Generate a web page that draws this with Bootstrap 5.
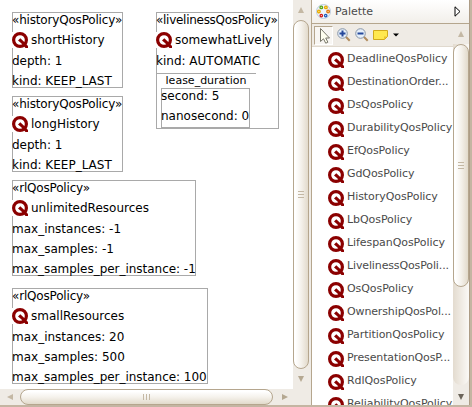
<!DOCTYPE html>
<html lang="en">
<head>
<meta charset="utf-8">
<title>QoS policy editor</title>
<link href="https://cdn.jsdelivr.net/npm/bootstrap@5.3.0/dist/css/bootstrap.min.css" rel="stylesheet">
<style>
body{width:472px;height:407px;overflow:hidden;background:#fff;color:#000;font-family:"DejaVu Sans",sans-serif;font-size:12px;line-height:20px}
.editor{height:407px;border-bottom:2px solid #c4b5a2}
.left-pane{width:309px}
.canvas{width:293px;height:389px;padding:12px 0 0 12px}
.diagram{display:grid;grid-template-columns:144px auto;grid-template-rows:76px 76px 96px 96px;row-gap:8px;justify-content:start}
.node{border:1px solid #a9a9a9;white-space:nowrap;justify-self:start}
.node>div,.inner-node>div{height:20px;text-indent:-1px}
.node>div:first-child{margin-top:-3px;letter-spacing:-.18px}
.node.tall>div:first-child{letter-spacing:-.28px}
.node .node-name{height:21px;margin-left:-1px;text-indent:0}
.node .node-name svg{background:#fff;flex:none;margin-top:2px}
.node-name span{margin-left:3px}
.w-a{width:111px}.w-b{width:184px}.w-c{width:196px}.w-d{width:123px}
.wide{grid-column:1/3}
.tall{grid-column:2;grid-row:1/3;height:117px}
.last-node{margin-top:4px;height:96px}
.long-line{letter-spacing:-.03px}
.node>.lease-title{width:99px;height:15px;margin-top:2px;border-top:1px solid #a9a9a9;font-size:11px;line-height:13px;text-align:center}
.node>.inner-node{width:89px;height:40px;margin-left:4px;border:1px solid #a9a9a9}
.inner-node>div:first-child{margin-top:-3px}
.sb{background:#efebe5}
.vbar{width:16px}
.hbar{height:16px}
.cap{flex:none;width:16px;height:16px;display:flex;align-items:center;justify-content:center}
.track-v{background:linear-gradient(90deg,#e3dbcf,#fbf9f6);border-radius:0 0 8px 8px}
.thumb{border:1px solid #b5a68e;border-radius:8px;display:flex;align-items:center;justify-content:center}
.thumb-v{background:linear-gradient(90deg,#fff 10%,#f5f2ec 50%,#e2dacb)}
.thumb-h{background:linear-gradient(#fff 10%,#f5f2ec 50%,#e2dacb)}
.sash{width:3px;background:#efebe5;border-right:1px solid #b5a68e}
.palette{width:157px;color:#4a4a4a;font-size:11px}
.pal-head{height:24px;background:linear-gradient(#fff,#f2efea);border-bottom:1px solid #b5a68e;padding:0 8px 0 4px}
.pal-tools{height:23px;background:#efebe5;border-bottom:1px solid #e0d9ce}
.pick{width:19px;height:19px;margin:1px 0 0 2px;background:#f8f6f3;border:1px solid #fff;border-top-color:#b5a68e;border-left-color:#b5a68e}
.pal-main{width:141px}
.pal-list{padding-top:1px;flex:1 1 0;overflow:hidden}
.pal-item{height:23px;line-height:23px;padding-left:16px;white-space:nowrap;letter-spacing:-.07px}
.pal-item svg{flex:none;margin-top:1px}
.pal-item span{margin-left:3px;margin-top:-3px}
.pal-item .clipped{letter-spacing:-.13px}
.edge{width:3px;background:#c4b5a2;border-left:1px solid #ad9c86}
</style>
<script src="https://cdn.jsdelivr.net/npm/bootstrap@5.3.0/dist/js/bootstrap.bundle.min.js"></script>
</head>
<body>
<svg width="0" height="0" class="position-absolute">
<symbol id="q" viewBox="0 0 16 16"><circle cx="8" cy="8" r="6.4" fill="none" stroke="#8b0000" stroke-width="3.2"/><path d="M6 8.5 8.3 6.2 12 9.8 16 14v2h-2.5L9 11z" fill="#8b0000"/></symbol>
</svg>
<div class="editor d-flex">
 <div class="left-pane d-flex flex-column">
  <div class="d-flex">
   <div class="canvas">
    <div class="diagram">
     <div class="node w-a"><div>«historyQosPolicy»</div><div class="node-name d-flex"><svg width="16" height="16"><use href="#q"/></svg><span>shortHistory</span></div><div>depth: 1</div><div>kind: KEEP_LAST</div></div>
     <div class="node w-d tall"><div>«livelinessQosPolicy»</div><div class="node-name d-flex"><svg width="16" height="16"><use href="#q"/></svg><span>somewhatLively</span></div><div>kind: AUTOMATIC</div><div class="lease-title">lease_duration</div><div class="inner-node"><div>second: 5</div><div>nanosecond: 0</div></div></div>
     <div class="node w-a"><div>«historyQosPolicy»</div><div class="node-name d-flex"><svg width="16" height="16"><use href="#q"/></svg><span>longHistory</span></div><div>depth: 1</div><div>kind: KEEP_LAST</div></div>
     <div class="node w-b wide"><div>«rlQosPolicy»</div><div class="node-name d-flex"><svg width="16" height="16"><use href="#q"/></svg><span>unlimitedResources</span></div><div>max_instances: -1</div><div>max_samples: -1</div><div class="long-line">max_samples_per_instance: -1</div></div>
     <div class="node w-c wide last-node"><div>«rlQosPolicy»</div><div class="node-name d-flex"><svg width="16" height="16"><use href="#q"/></svg><span>smallResources</span></div><div>max_instances: 20</div><div>max_samples: 500</div><div class="long-line">max_samples_per_instance: 100</div></div>
    </div>
   </div>
   <div class="sb vbar d-flex flex-column">
    <div class="cap pt-1"><svg width="6" height="6"><path d="M0 6 3 0 6 6z" fill="#c4b8a4"/></svg></div>
    <div class="thumb thumb-v flex-fill mt-1"><svg width="6" height="7"><path d="M0 .5h6M0 3.5h6M0 6.5h6" stroke="#c4b8a4"/></svg></div>
    <div class="cap mb-1 pt-1"><svg width="6" height="6"><path d="M0 0h6L3 6z" fill="#b5a891"/></svg></div>
   </div>
  </div>
  <div class="sb hbar d-flex">
   <div class="cap ms-1 pe-1"><svg width="6" height="6"><path d="M6 0v6L0 3z" fill="#c4b8a4"/></svg></div>
   <div class="thumb thumb-h flex-fill"><svg width="7" height="6"><path d="M.5 0v6M3.5 0v6M6.5 0v6" stroke="#c4b8a4"/></svg></div>
   <div class="cap ms-1"><svg width="6" height="6"><path d="M0 0v6L6 3z" fill="#b5a891"/></svg></div><div class="cap"></div>
  </div>
 </div>
 <div class="sash"></div>
 <div class="palette d-flex flex-column">
  <div class="pal-head d-flex align-items-center">
   <svg width="15" height="15" class="me-1"><circle cx="7.5" cy="7.5" r="7" fill="#eef4fa" stroke="#bccde0"/><g stroke-width="1.3" fill="#fff"><circle cx="5.3" cy="3.4" r="1.3" stroke="#5aa51c" fill="#d8efb0"/><circle cx="9.9" cy="3.4" r="1.3" stroke="#e8a800" fill="#fff08a"/><circle cx="2.9" cy="7.5" r="1.3" stroke="#e8a800" fill="#fff08a"/><circle cx="12.1" cy="7.5" r="1.3" stroke="#e07a10" fill="#ffd8a0"/><circle cx="5.3" cy="11.6" r="1.2" stroke="#d21616"/><circle cx="9.7" cy="11.6" r="1.2" stroke="#1d5bbb"/></g></svg>
   <span>Palette</span>
   <svg width="7" height="11" class="ms-auto"><path d="M1 .8v9.4L6 5.5z" fill="#fff" stroke="#000"/></svg>
  </div>
  <div class="d-flex flex-fill">
   <div class="pal-main d-flex flex-column">
    <div class="pal-tools d-flex align-items-center">
     <div class="pick d-flex"><svg width="16" height="17"><path d="M5.5 1.5v13l3-2.7 2.2 4.4 2.2-1-2.2-4.2h3.8z" fill="#fffff0" stroke="#77766a"/></svg></div>
     <svg width="14" height="14" class="ms-1"><path d="m8.8 8.8 3.9 3.9" stroke="#b08b5d" stroke-width="2"/><circle cx="5.5" cy="5.5" r="4.8" fill="#e6eff9" stroke="#8896a8"/><path d="M2.5 5.5h6M5.5 2.5v6" stroke="#25489b" stroke-width="2"/></svg>
     <svg width="14" height="14" class="ms-1 me-1"><path d="m8.8 8.8 3.9 3.9" stroke="#b08b5d" stroke-width="2"/><circle cx="5.5" cy="5.5" r="4.8" fill="#e6eff9" stroke="#8896a8"/><path d="M2.5 5.5h6" stroke="#25489b" stroke-width="2"/></svg>
     <svg width="16" height="12"><path d="M.5 1.5h14v6l-3 3H.5z" fill="#ffe84f" stroke="#d2aa1c"/><path d="M14 7.5h-3v3z" fill="#eac22b"/></svg>
     <svg width="6" height="4" class="ms-1"><path d="M0 .5h6L3 3.5z" fill="#000"/></svg>
    </div>
    <div class="pal-list bg-white">
     <div class="pal-item d-flex align-items-center"><svg width="16" height="16"><use href="#q"/></svg><span>DeadlineQosPolicy</span></div>
     <div class="pal-item d-flex align-items-center"><svg width="16" height="16"><use href="#q"/></svg><span class="clipped">DestinationOrder...</span></div>
     <div class="pal-item d-flex align-items-center"><svg width="16" height="16"><use href="#q"/></svg><span>DsQosPolicy</span></div>
     <div class="pal-item d-flex align-items-center"><svg width="16" height="16"><use href="#q"/></svg><span>DurabilityQosPolicy</span></div>
     <div class="pal-item d-flex align-items-center"><svg width="16" height="16"><use href="#q"/></svg><span>EfQosPolicy</span></div>
     <div class="pal-item d-flex align-items-center"><svg width="16" height="16"><use href="#q"/></svg><span>GdQosPolicy</span></div>
     <div class="pal-item d-flex align-items-center"><svg width="16" height="16"><use href="#q"/></svg><span>HistoryQosPolicy</span></div>
     <div class="pal-item d-flex align-items-center"><svg width="16" height="16"><use href="#q"/></svg><span>LbQosPolicy</span></div>
     <div class="pal-item d-flex align-items-center"><svg width="16" height="16"><use href="#q"/></svg><span>LifespanQosPolicy</span></div>
     <div class="pal-item d-flex align-items-center"><svg width="16" height="16"><use href="#q"/></svg><span class="clipped">LivelinessQosPoli...</span></div>
     <div class="pal-item d-flex align-items-center"><svg width="16" height="16"><use href="#q"/></svg><span>OsQosPolicy</span></div>
     <div class="pal-item d-flex align-items-center"><svg width="16" height="16"><use href="#q"/></svg><span class="clipped">OwnershipQosPol...</span></div>
     <div class="pal-item d-flex align-items-center"><svg width="16" height="16"><use href="#q"/></svg><span>PartitionQosPolicy</span></div>
     <div class="pal-item d-flex align-items-center"><svg width="16" height="16"><use href="#q"/></svg><span class="clipped">PresentationQosP...</span></div>
     <div class="pal-item d-flex align-items-center"><svg width="16" height="16"><use href="#q"/></svg><span>RdlQosPolicy</span></div>
     <div class="pal-item d-flex align-items-center"><svg width="16" height="16"><use href="#q"/></svg><span>ReliabilityQosPolicy</span></div>
    </div>
   </div>
   <div class="sb vbar d-flex flex-column">
    <div class="cap mb-1 pt-1"><svg width="6" height="6"><path d="M0 6 3 0 6 6z" fill="#c4b8a4"/></svg></div>
    <div class="track-v flex-fill mb-1 d-flex flex-column"><div class="thumb thumb-v" style="height:243px"><svg width="6" height="7"><path d="M0 .5h6M0 3.5h6M0 6.5h6" stroke="#c4b8a4"/></svg></div></div>
    <div class="cap"><svg width="6" height="6"><path d="M0 0h6L3 6z" fill="#6b6459"/></svg></div>
   </div>
  </div>
 </div>
 <div class="edge"></div>
</div>
</body>
</html>
